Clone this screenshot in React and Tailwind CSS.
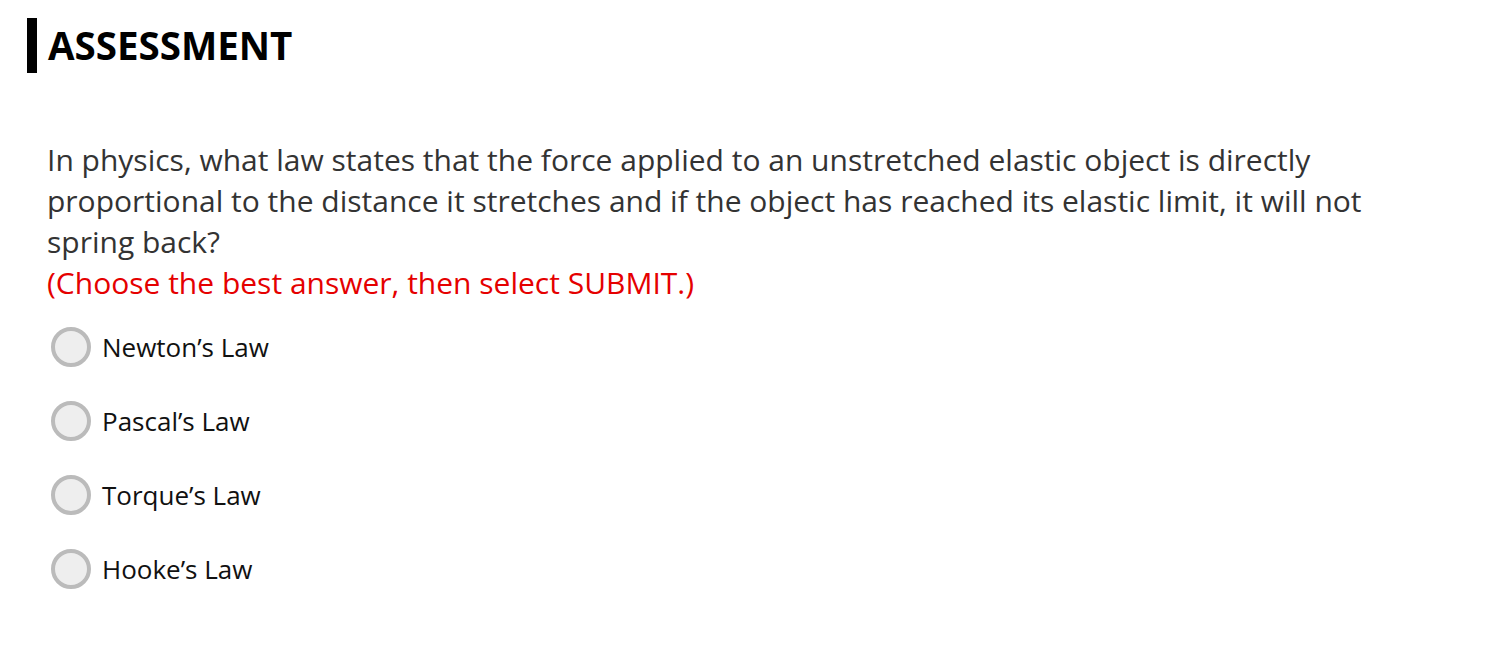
const options = ['Newton’s Law', 'Pascal’s Law', 'Torque’s Law', 'Hooke’s Law']

export default function App() {
  return (
    <div className="min-h-screen bg-white font-['Open_Sans',sans-serif]">
      <div className="pt-[18px] pl-[27px]">
        <div className="flex items-center h-[55px]">
          <div className="w-[10px] h-[55px] bg-black" />
          <h1 className="ml-[11px] text-[38.5px] font-bold text-black leading-none">ASSESSMENT</h1>
        </div>
      </div>
      <div className="pl-[47px] pt-[66px]">
        <p className="w-[1350px] text-[30px] leading-[41px] text-[#333]">
          In physics, what law states that the force applied to an unstretched elastic object is directly proportional to the distance it stretches and if the object has reached its elastic limit, it will not spring back?
          <br />
          <span className="text-[#e50000]">(Choose the best answer, then select SUBMIT.)</span>
        </p>
        <div className="mt-[24px] flex flex-col gap-[34px]">
          {options.map((o) => (
            <label key={o} className="flex items-center gap-[11px] cursor-pointer">
              <span className="ml-[4px] w-[40px] h-[40px] rounded-full border-[4px] border-[#bbb] bg-[#eee]" />
              <span className="text-[26px] text-[#111]">{o}</span>
            </label>
          ))}
        </div>
      </div>
    </div>
  )
}
